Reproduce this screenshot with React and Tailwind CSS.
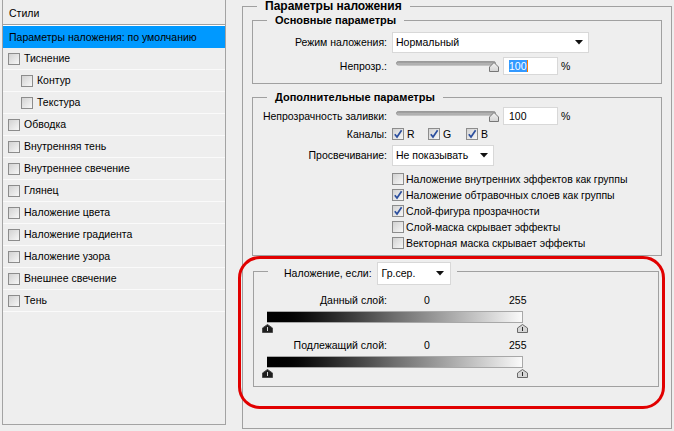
const styleItems = [
  { label: "Тиснение" },
  { label: "Контур", indent: true },
  { label: "Текстура", indent: true },
  { label: "Обводка" },
  { label: "Внутренняя тень" },
  { label: "Внутреннее свечение" },
  { label: "Глянец" },
  { label: "Наложение цвета" },
  { label: "Наложение градиента" },
  { label: "Наложение узора" },
  { label: "Внешнее свечение" },
  { label: "Тень" },
];

const advancedChecks = [
  { label: "Наложение внутренних эффектов как группы", checked: false },
  { label: "Наложение обтравочных слоев как группы", checked: true },
  { label: "Слой-фигура прозрачности", checked: true },
  { label: "Слой-маска скрывает эффекты", checked: false },
  { label: "Векторная маска скрывает эффекты", checked: false },
];

function Box({ checked }) {
  return (
    <span className="flex h-[12px] w-[12px] shrink-0 items-center justify-center border border-[#8c8c8c] bg-linear-to-br from-[#d2d2d2] to-[#f7f7f7]">
      {checked && (
        <svg width="10" height="10" viewBox="0 0 10 10">
          <path d="M1.8 5.2 L4 8 L8.6 1.2" fill="none" stroke="#2c4f9e" strokeWidth="1.7" />
        </svg>
      )}
    </span>
  );
}

function Arrow() {
  return (
    <svg width="8" height="5" viewBox="0 0 8 5" className="shrink-0">
      <path d="M0 0 H8 L4 4.5 Z" fill="#111" />
    </svg>
  );
}

function Dropdown({ value, width }) {
  return (
    <div className={`flex h-[21px] items-center justify-between border border-[#d8d8d8] bg-white pl-[3px] pr-[5px] ${width}`}>
      <span>{value}</span>
      <Arrow />
    </div>
  );
}

function Slider() {
  return (
    <svg width="108" height="18" viewBox="0 0 108 18" className="shrink-0">
      <defs>
        <linearGradient id="trk" x1="0" y1="0" x2="0" y2="1">
          <stop offset="0" stopColor="#8c8c8c" />
          <stop offset="1" stopColor="#cfcfcf" />
        </linearGradient>
        <linearGradient id="thm" x1="0" y1="0" x2="0" y2="1">
          <stop offset="0" stopColor="#f4f4f4" />
          <stop offset="1" stopColor="#d4d4d4" />
        </linearGradient>
      </defs>
      <rect x="4.5" y="4.5" width="99" height="3.5" rx="1.8" fill="url(#trk)" stroke="#9a9a9a" />
      <path d="M102 5.5 L106.5 10 V14.5 H97.5 V10 Z" fill="url(#thm)" stroke="#777" strokeLinejoin="round" />
    </svg>
  );
}

function NumberInput({ selected }) {
  return (
    <div className="flex h-[18px] w-[55px] items-center border border-[#d8d8d8] bg-white pl-[5px]">
      {selected ? (
        <>
          <span className="bg-[#3399ff] leading-[12px] text-white">100</span>
          <span className="h-[12px] w-[1px] bg-[#ff7a00]" />
        </>
      ) : (
        <span>100</span>
      )}
    </div>
  );
}

function Row({ label, className = "", children }) {
  return (
    <div className={`flex items-center ${className}`}>
      <span className="w-[134px] shrink-0 text-right">{label}</span>
      <div className="ml-[5px] flex items-center">{children}</div>
    </div>
  );
}

function Thumb({ dark, className }) {
  return (
    <svg width="11" height="9" viewBox="0 0 11 9" className={className}>
      <path
        d="M5.5 0.5 L10.5 4 V8.5 H0.5 V4 Z"
        fill={dark ? "#1e1e1e" : "#d6d6d6"}
        stroke={dark ? "#4a4a4a" : "#6a6a6a"}
        strokeLinejoin="round"
      />
      <path d="M5.5 3 V7" stroke={dark ? "#d8d8d8" : "#2a2a2a"} strokeWidth="1" />
    </svg>
  );
}

function BlendBar({ label, className = "" }) {
  return (
    <div className={className}>
      <div className="flex h-[13px] items-center">
        <span className="w-[133px] shrink-0 text-right">{label}</span>
        <span className="ml-[37px] w-[85px]">0</span>
        <span>255</span>
      </div>
      <div className="ml-[13px] mt-[4px] h-[12px] w-[256px] border border-l-0 border-[#a8a8a8] bg-linear-to-r from-black via-[#6e6e6e] to-[#fafafa]" />
      <div className="ml-[13px] mt-[1px] flex h-[9px] w-[256px] justify-between">
        <Thumb dark className="-ml-[5px]" />
        <Thumb className="-mr-[5px]" />
      </div>
    </div>
  );
}

export default function App() {
  return (
    <div className="flex h-[431px] w-[674px] overflow-hidden bg-[#eeeeee] font-['Liberation_Sans',Arial,sans-serif] text-[10.5px] leading-[13px] text-black">
      {/* Styles list */}
      <div className="ml-[2px] flex h-[425px] w-[224px] shrink-0 flex-col border-x border-b border-[#a3a3a3]">
        <div className="flex h-[25px] items-center border-b border-[#a0a0a0] pl-[6px] pt-[2px]">
          Стили
        </div>
        <div className="flex h-[23px] items-center border-t border-white bg-[#0099ff] pl-[6px]">
          Параметры наложения: по умолчанию
        </div>
        {styleItems.map((item) => (
          <div
            key={item.label}
            className={`flex h-[22px] items-center gap-[4px] border-b border-[#fafafa] ${
              item.indent ? "pl-[18px]" : "pl-[5px]"
            }`}
          >
            <Box />
            <span>{item.label}</span>
          </div>
        ))}
      </div>

      {/* Blending options */}
      <fieldset className="ml-[16px] h-[429px] w-[430px] shrink-0 border border-[#a0a0a0] px-[9px]">
        <legend className="ml-[5px] px-[8px] text-[12px] font-bold leading-[13px]">
          Параметры наложения
        </legend>

        <fieldset className="border border-[#a0a0a0] pb-[8px] pt-[5px]">
          <legend className="ml-[14px] px-[8px] text-[11px] font-bold leading-[14px]">
            Основные параметры
          </legend>
          <Row label="Режим наложения:">
            <Dropdown value="Нормальный" width="w-[197px]" />
          </Row>
          <Row label="Непрозр.:" className="mt-[4px]">
            <Slider />
            <div className="ml-[3px]">
              <NumberInput selected />
            </div>
            <span className="ml-[3px]">%</span>
          </Row>
        </fieldset>

        <fieldset className="mt-[6px] border border-[#a0a0a0] pb-[4px] pt-[3px]">
          <legend className="ml-[14px] px-[8px] text-[11px] font-bold leading-[14px]">
            Дополнительные параметры
          </legend>
          <Row label="Непрозрачность заливки:">
            <Slider />
            <div className="ml-[3px]">
              <NumberInput />
            </div>
            <span className="ml-[3px]">%</span>
          </Row>
          <Row label="Каналы:" className="mt-[3px] h-[12px]">
            <div className="flex w-[36px] items-center gap-[3px]">
              <Box checked />
              <span>R</span>
            </div>
            <div className="flex w-[38px] items-center gap-[3px]">
              <Box checked />
              <span>G</span>
            </div>
            <div className="flex items-center gap-[3px]">
              <Box checked />
              <span>B</span>
            </div>
          </Row>
          <Row label="Просвечивание:" className="mt-[5px]">
            <Dropdown value="Не показывать" width="w-[102px]" />
          </Row>
          <div className="ml-[139px] mt-[5px] flex flex-col">
            {advancedChecks.map((c) => (
              <div key={c.label} className="flex h-[16px] items-center gap-[2px]">
                <Box checked={c.checked} />
                <span>{c.label}</span>
              </div>
            ))}
          </div>
        </fieldset>

        {/* highlighted "blend if" section */}
        <div className="-ml-[14px] -mr-[3px] rounded-[22px] border-[3px] border-[#e10000] pb-[19px] pt-[3px]">
          <fieldset className="ml-[12px] mr-[3px] border border-[#a0a0a0] pb-[8px] pt-[14px]">
            <legend className="ml-[14px] flex h-[18px] items-start pl-[16px] pr-[6px]">
              <span className="flex h-[23px] items-center">Наложение, если:</span>
              <div className="ml-[5px] flex h-[23px] w-[74px] items-center justify-between border border-[#d8d8d8] bg-white pl-[4px] pr-[6px]">
                <span>Гр.сер.</span>
                <Arrow />
              </div>
            </legend>
            <BlendBar label="Данный слой:" />
            <BlendBar label="Подлежащий слой:" className="mt-[6px]" />
          </fieldset>
        </div>
      </fieldset>
    </div>
  );
}
